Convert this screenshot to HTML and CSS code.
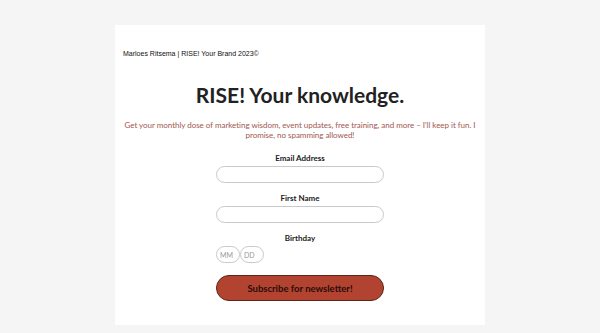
FILE: index.html
```html
<!DOCTYPE html>
<html>
<head>
<meta charset="utf-8">
<link rel="stylesheet" href="styles.css">
</head>
<body>
<div class="card">
  <p class="credit">Marloes Ritsema | RISE! Your Brand 2023©</p>
  <h1 class="title">RISE! Your knowledge.</h1>
  <p class="intro">Get your monthly dose of marketing wisdom, event updates, free training, and more – I'll keep it fun. I promise, no spamming allowed!</p>
  <form class="form">
    <label class="label">Email Address</label>
    <input class="field" type="text">
    <label class="label">First Name</label>
    <input class="field" type="text">
    <label class="label">Birthday</label>
    <div class="dates">
      <input class="date" type="text" placeholder="MM">
      <input class="date" type="text" placeholder="DD">
    </div>
    <button class="submit" type="button">Subscribe for newsletter!</button>
  </form>
</div>
</body>
</html>
```
FILE: styles.css
```css
html, body {
  margin: 0;
  padding: 0;
  background: #f5f5f5;
}
body {
  padding: 25px 115px 8px;
  font-family: Lato, "Open Sans", sans-serif;
}
.card {
  background: #fff;
  height: 300px;
  box-sizing: border-box;
  padding: 24px 6px 0;
  text-align: center;
}
.credit {
  margin: 0 2px;
  text-align: left;
  font-family: "Liberation Sans", Arial, sans-serif;
  font-size: 7px;
  line-height: 10px;
  color: #111;
}
.title {
  margin: 23px 0 0;
  font-size: 21px;
  line-height: 26px;
  font-weight: 700;
  color: #222;
}
.intro {
  margin: 13px 0 0;
  font-size: 8px;
  line-height: 9.5px;
  letter-spacing: -0.03px;
  color: #a2574e;
}
.form {
  display: flex;
  flex-direction: column;
  align-items: center;
  margin-top: 13px;
}
.label {
  font-size: 8px;
  font-weight: 700;
  line-height: 10px;
  color: #222;
  margin-bottom: 3px;
}
.field {
  box-sizing: border-box;
  width: 168px;
  height: 17px;
  border: 1px solid #c9c9c9;
  border-radius: 9px;
  margin: 0 0 10px;
  padding: 0;
  background: #fff;
}
.dates {
  display: flex;
  width: 168px;
}
.date {
  box-sizing: border-box;
  width: 24px;
  height: 17px;
  border: 1px solid #c9c9c9;
  border-radius: 9px;
  padding: 0 0 0 3px;
  font-family: Lato, sans-serif;
  font-size: 7px;
  background: #fff;
}
.date::placeholder {
  color: #999;
}
.submit {
  box-sizing: border-box;
  margin-top: 12px;
  width: 168px;
  height: 26px;
  border: 1px solid #5a2418;
  border-radius: 13px;
  background: #b24331;
  color: #2a0d08;
  font-family: Lato, sans-serif;
  font-size: 9.5px;
  font-weight: 700;
}
```
